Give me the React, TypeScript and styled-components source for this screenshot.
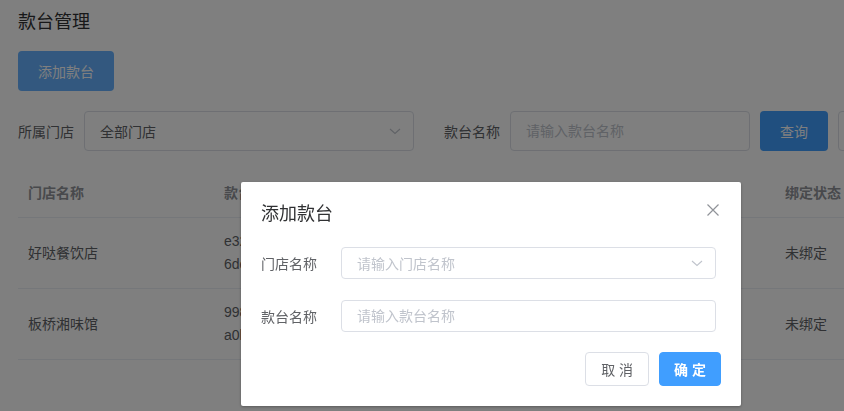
import React from 'react';
import styled, { createGlobalStyle } from 'styled-components';

const GlobalStyle = createGlobalStyle`
	html, body {
		margin: 0;
		padding: 0;
		background: #fff;
		overflow: hidden;
	}
	body {
		font-family: 'Liberation Sans', 'Noto Sans CJK SC', sans-serif;
		font-size: 14px;
		color: #606266;
	}
	* {
		box-sizing: border-box;
	}
`;

const stores = [
	{ name: '好哒餐饮店', code: ['e32f9a7c1d4b', '6de0b83f25a1'], status: '未绑定' },
	{ name: '板桥湘味馆', code: ['998c4e1a07d3', 'a0b5f2c96e81'], status: '未绑定' },
];

const App: React.FC = () => {
	return (
		<>
			<GlobalStyle />
			<Page>
				<PageTitle>款台管理</PageTitle>
				<AddButton>添加款台</AddButton>
				<FilterRow>
					<FilterLabel>所属门店</FilterLabel>
					<SelectBox $width={330}>
						<SelectText>全部门店</SelectText>
						<Chevron />
					</SelectBox>
					<FilterLabel $gap>款台名称</FilterLabel>
					<TextInput $width={240} placeholder="请输入款台名称" />
					<PrimaryButton>查询</PrimaryButton>
					<PlainButton>重置</PlainButton>
				</FilterRow>
				<Table>
					<HeaderRow>
						<HeadCell>门店名称</HeadCell>
						<HeadCell>款台编号</HeadCell>
						<HeadCell />
						<HeadCell />
						<HeadCell>绑定状态</HeadCell>
					</HeaderRow>
					{stores.map((s, i) => (
						<BodyRow key={i}>
							<Cell>{s.name}</Cell>
							<Cell>
								<span>{s.code[0]}</span>
								<span>{s.code[1]}</span>
							</Cell>
							<Cell />
							<Cell />
							<Cell>{s.status}</Cell>
						</BodyRow>
					))}
				</Table>
			</Page>
			<Overlay>
				<Dialog>
					<DialogHeader>
						<DialogTitle>添加款台</DialogTitle>
						<CloseButton aria-label="close">
							<svg width="14" height="14" viewBox="0 0 14 14">
								<path d="M1.5 1.5 L12.5 12.5 M12.5 1.5 L1.5 12.5" stroke="#909399" strokeWidth="1.2" fill="none" />
							</svg>
						</CloseButton>
					</DialogHeader>
					<DialogBody>
						<FormItem>
							<FormLabel>门店名称</FormLabel>
							<SelectBox $width={375} $light>
								<Placeholder>请输入门店名称</Placeholder>
								<Chevron />
							</SelectBox>
						</FormItem>
						<FormItem>
							<FormLabel>款台名称</FormLabel>
							<TextInput $width={375} placeholder="请输入款台名称" />
						</FormItem>
					</DialogBody>
					<DialogFooter>
						<FooterButton>取 消</FooterButton>
						<FooterButton $primary>确 定</FooterButton>
					</DialogFooter>
				</Dialog>
			</Overlay>
		</>
	);
};
export default App;

const Chevron: React.FC = () => (
	<ChevronIcon width="12" height="12" viewBox="0 0 12 12">
		<path d="M1 4 L6 8.5 L11 4" stroke="#c0c4cc" strokeWidth="1.1" fill="none" />
	</ChevronIcon>
);

const Page = styled.div`
	width: 1000px;
	padding: 8px 18px 0;
`;

const PageTitle = styled.div`
	font-size: 18px;
	line-height: 28px;
	color: #303133;
	margin-bottom: 15px;
`;

const AddButton = styled.button`
	display: block;
	height: 40px;
	padding: 0 20px;
	border: none;
	border-radius: 4px;
	background: #66b1ff;
	color: #fff;
	font-family: inherit;
	font-size: 14px;
`;

const FilterRow = styled.div`
	display: flex;
	align-items: center;
	margin-top: 20px;
	height: 40px;
`;

const FilterLabel = styled.span<{ $gap?: boolean }>`
	flex-shrink: 0;
	color: #606266;
	font-size: 14px;
	margin-right: 10px;
	margin-left: ${(p) => (p.$gap ? '30px' : '0')};
`;

const SelectBox = styled.div<{ $width: number; $light?: boolean }>`
	flex-shrink: 0;
	width: ${(p) => p.$width}px;
	height: ${(p) => (p.$light ? '32px' : '40px')};
	border: 1px solid #dcdfe6;
	border-radius: 4px;
	background: #fff;
	display: flex;
	align-items: center;
	justify-content: space-between;
	padding: 0 12px 0 15px;
`;

const SelectText = styled.span`
	color: #606266;
	font-size: 14px;
`;

const Placeholder = styled.span`
	color: #c0c4cc;
	font-size: 14px;
`;

const ChevronIcon = styled.svg`
	display: block;
`;

const TextInput = styled.input<{ $width: number }>`
	flex-shrink: 0;
	width: ${(p) => p.$width}px;
	height: 100%;
	border: 1px solid #dcdfe6;
	border-radius: 4px;
	padding: 0 15px;
	font-family: inherit;
	font-size: 14px;
	color: #606266;
	outline: none;
	&::placeholder {
		color: #c0c4cc;
	}
`;

const PrimaryButton = styled.button`
	flex-shrink: 0;
	height: 40px;
	margin-left: 10px;
	padding: 0 20px;
	border: none;
	border-radius: 4px;
	background: #409eff;
	color: #fff;
	font-family: inherit;
	font-size: 14px;
`;

const PlainButton = styled(PrimaryButton)`
	background: #fff;
	border: 1px solid #dcdfe6;
	color: #606266;
`;

const Table = styled.div`
	margin-top: 19px;
	width: 960px;
`;

const HeaderRow = styled.div`
	display: grid;
	grid-template-columns: 196px 190px 190px 181px 1fr;
	border-bottom: 1px solid #ebeef5;
`;

const BodyRow = styled(HeaderRow)``;

const HeadCell = styled.div`
	padding: 12px 10px;
	line-height: 23px;
	font-weight: bold;
	color: #909399;
	font-size: 14px;
	white-space: nowrap;
`;

const Cell = styled.div`
	padding: 12px 10px;
	line-height: 23px;
	color: #606266;
	font-size: 14px;
	display: flex;
	flex-direction: column;
	justify-content: center;
	min-height: 70px;
`;

const Overlay = styled.div`
	position: fixed;
	inset: 0;
	background: rgba(0, 0, 0, 0.5);
	padding: 182px 0 0 241px;
`;

const Dialog = styled.div`
	position: relative;
	width: 500px;
	background: #fff;
	border-radius: 2px;
	box-shadow: 0 1px 3px rgba(0, 0, 0, 0.3);
`;

const DialogHeader = styled.div`
	padding: 20px 20px 10px;
`;

const DialogTitle = styled.span`
	font-size: 18px;
	line-height: 24px;
	color: #303133;
`;

const CloseButton = styled.button`
	position: absolute;
	top: 21px;
	right: 21px;
	width: 14px;
	height: 14px;
	padding: 0;
	border: none;
	background: transparent;
	display: flex;
`;

const DialogBody = styled.div`
	padding: 11px 25px 0 20px;
`;

const FormItem = styled.div`
	display: flex;
	align-items: center;
	height: 32px;
	margin-bottom: 21px;
	&:last-child {
		margin-bottom: 20px;
	}
`;

const FormLabel = styled.label`
	width: 80px;
	flex-shrink: 0;
	color: #606266;
	font-size: 14px;
`;

const DialogFooter = styled.div`
	display: flex;
	justify-content: flex-end;
	gap: 10px;
	padding: 0 20px 20px;
`;

const FooterButton = styled.button<{ $primary?: boolean }>`
	height: 34px;
	padding: 0 ${(p) => (p.$primary ? '14px' : '15px')};
	border-radius: 4px;
	font-family: inherit;
	font-size: 14px;
	border: 1px solid ${(p) => (p.$primary ? '#409eff' : '#dcdfe6')};
	background: ${(p) => (p.$primary ? '#409eff' : '#fff')};
	color: ${(p) => (p.$primary ? '#fff' : '#606266')};
	font-weight: ${(p) => (p.$primary ? 'bold' : 'normal')};
`;
